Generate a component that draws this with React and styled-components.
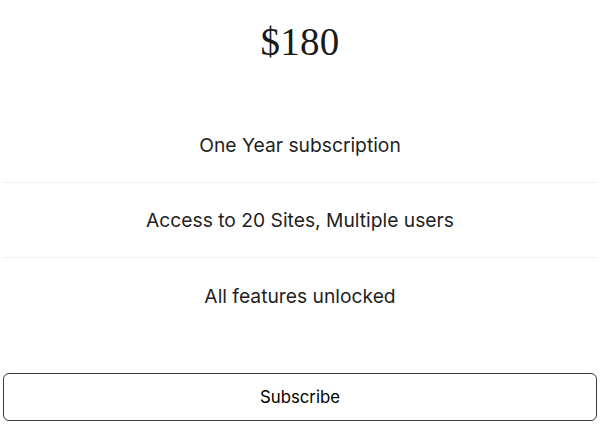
import React from "react";
import styled, { createGlobalStyle } from "styled-components";

const Global = createGlobalStyle`
  html, body { margin: 0; padding: 0; background: #fff; }
  body { font-family: Inter, "Noto Sans", sans-serif; color: #1c1c1c; }
`;

const Card = styled.div`
  width: 600px;
  box-sizing: border-box;
  padding: 0 3px;
  display: flex;
  flex-direction: column;
`;

const Price = styled.div`
  height: 84px;
  line-height: 84px;
  text-align: center;
  font-family: "Liberation Serif", "Times New Roman", serif;
  font-size: 39px;
  letter-spacing: 0.3px;
  color: #1a1a1a;
`;

const Features = styled.ul`
  list-style: none;
  margin: 24px 0 0;
  padding: 0;
  display: flex;
  flex-direction: column;
`;

const Feature = styled.li`
  height: 75px;
  box-sizing: border-box;
  display: flex;
  align-items: center;
  justify-content: center;
  font-size: 19.25px;
  color: #1f1f1f;
  border-bottom: ${(p) => (p.$last ? "none" : "1px solid #f0f0f0")};
`;

const Button = styled.button`
  margin-top: 40px;
  height: 48px;
  width: 100%;
  background: #fff;
  border: 1px solid #3a3a3a;
  border-radius: 6px;
  font-family: Inter, "Noto Sans", sans-serif;
  font-size: 16.75px;
  font-weight: 400;
  color: #000;
  cursor: pointer;
`;

const items = [
  "One Year subscription",
  "Access to 20 Sites, Multiple users",
  "All features unlocked",
];

export default function App() {
  return (
    <>
      <Global />
      <Card>
        <Price>$180</Price>
        <Features>
          {items.map((t, i) => (
            <Feature key={t} $last={i === items.length - 1}>
              {t}
            </Feature>
          ))}
        </Features>
        <Button>Subscribe</Button>
      </Card>
    </>
  );
}
